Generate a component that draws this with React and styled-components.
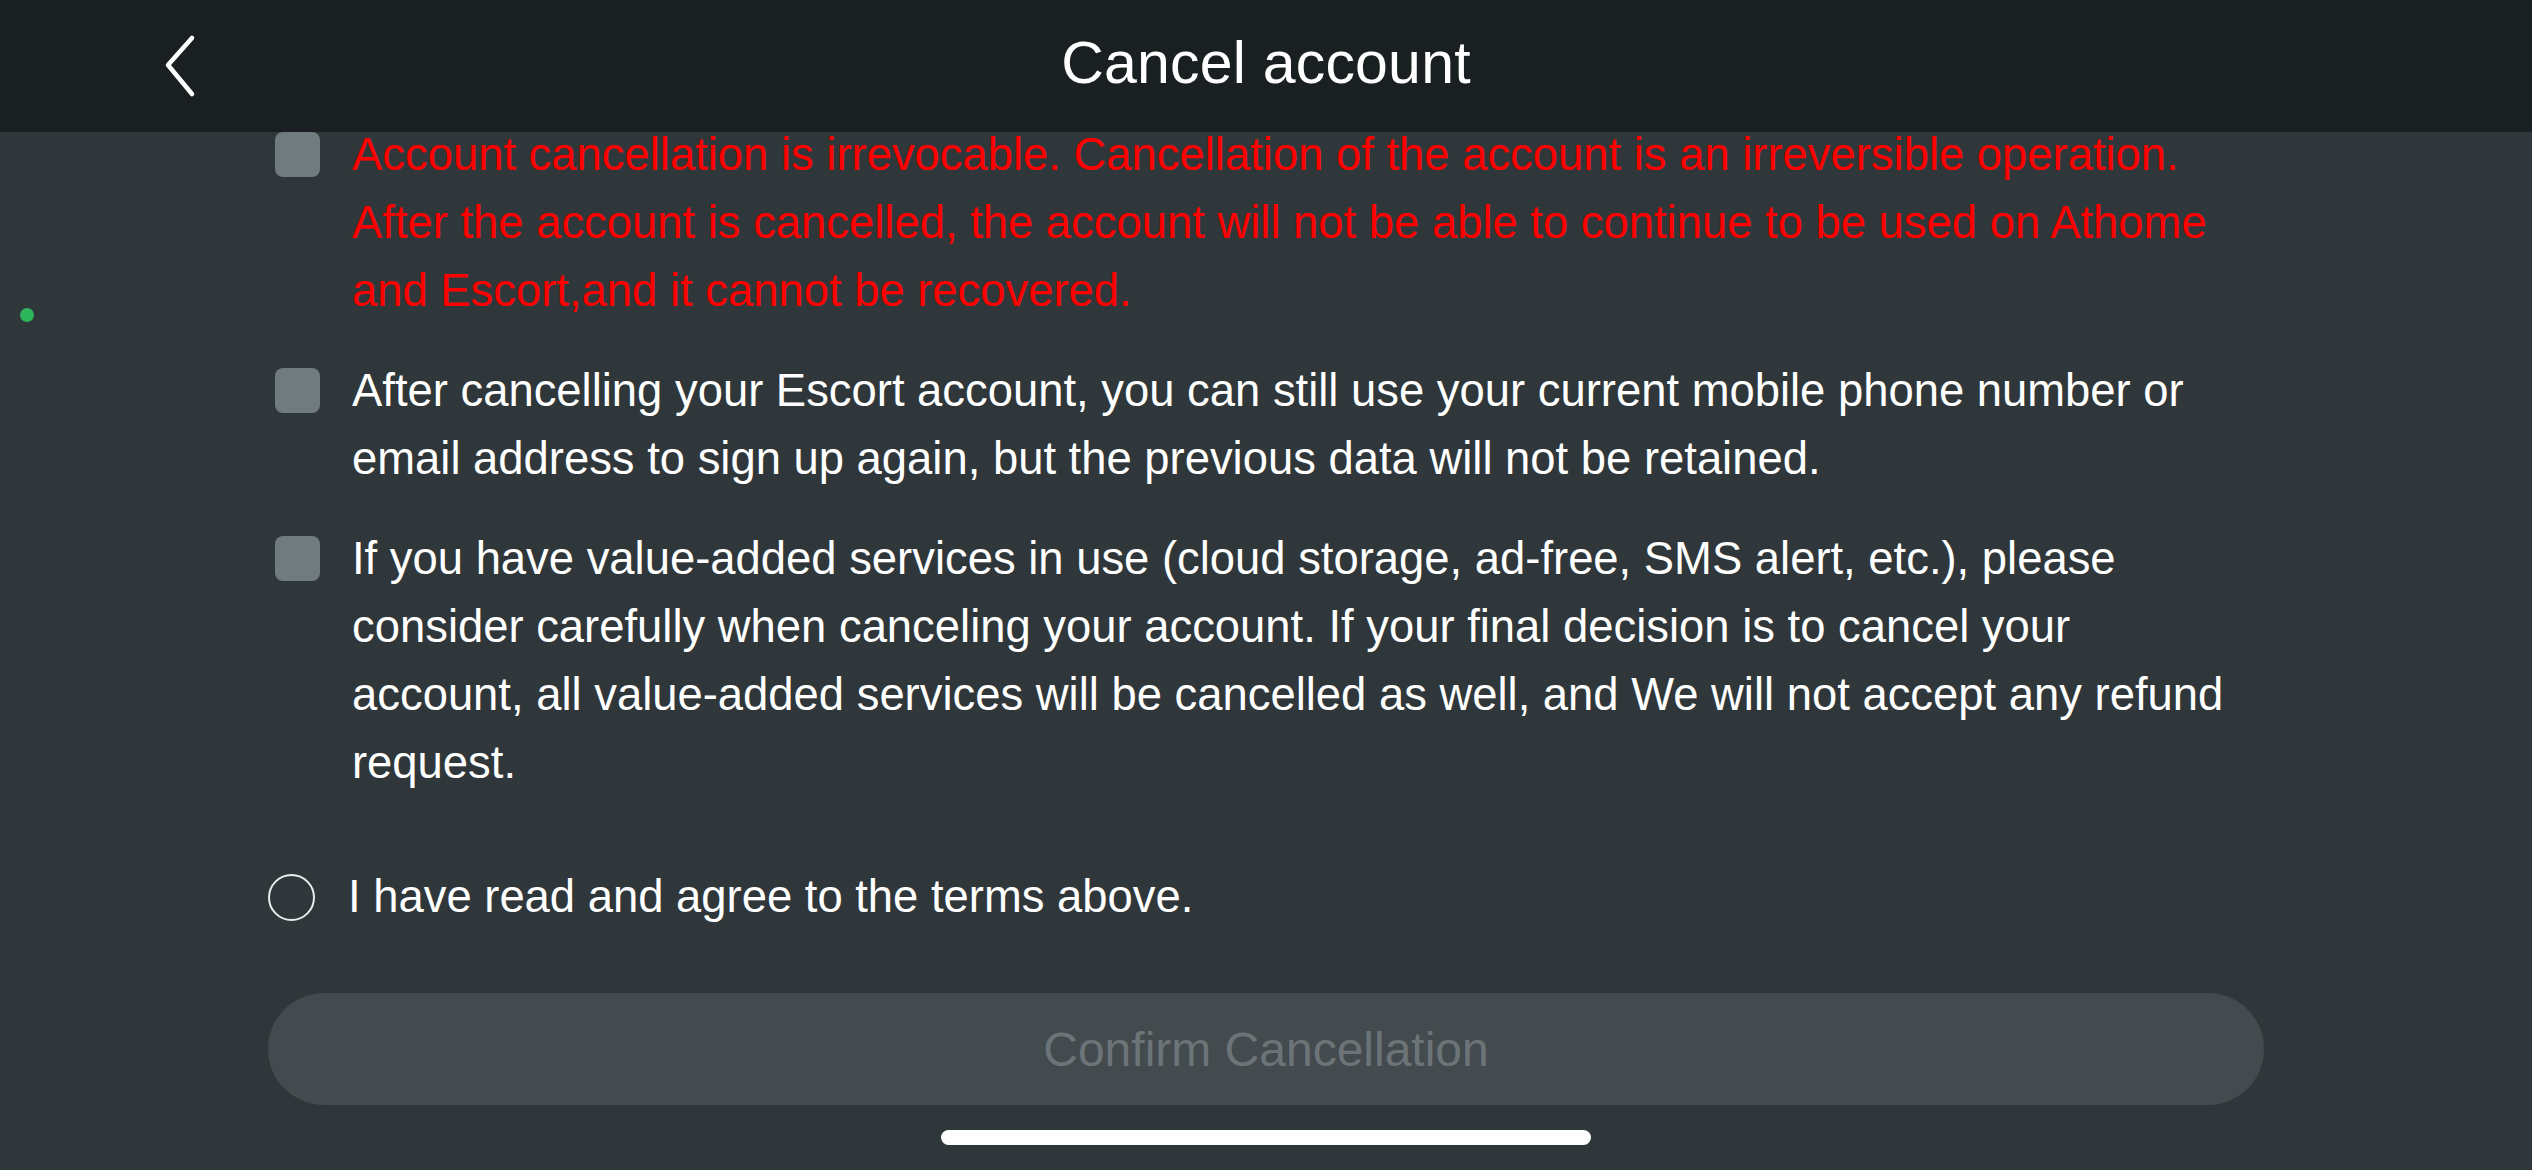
import React, { useState } from 'react'
import styled, { createGlobalStyle } from 'styled-components'

const GlobalStyle = createGlobalStyle`
  html, body {
    margin: 0;
    padding: 0;
    background: #30373a;
    overflow: hidden;
  }
  * {
    box-sizing: border-box;
  }
`

const Screen = styled.div`
  position: relative;
  width: 2532px;
  height: 1170px;
  display: flex;
  flex-direction: column;
  background: #30373a;
  font-family: 'Liberation Sans', Arial, sans-serif;
  color: #ffffff;
  overflow: hidden;
`

const Header = styled.header`
  position: relative;
  z-index: 1;
  flex: 0 0 132px;
  display: grid;
  grid-template-columns: 1fr auto 1fr;
  align-items: center;
  padding-bottom: 6px;
  background: #1a2022;
`

const BackButton = styled.button`
  justify-self: start;
  display: flex;
  align-items: center;
  margin-left: 152px;
  margin-top: 6px;
  padding: 8px;
  border: none;
  background: transparent;
  cursor: pointer;
`

const Title = styled.h1`
  margin: 0;
  font-size: 59px;
  font-weight: 400;
  letter-spacing: 0.2px;
  color: #ffffff;
`

const Body = styled.main`
  flex: 1;
  width: 1996px;
  margin: 0 auto;
  display: flex;
  flex-direction: column;
`

const TermList = styled.ul`
  list-style: none;
  margin: -11px 0 0;
  padding: 0;
  display: flex;
  flex-direction: column;
  gap: 32px;
`

const Term = styled.li`
  display: grid;
  grid-template-columns: 45px 1fr;
  column-gap: 32px;
  padding-left: 7px;
  padding-right: 30px;
`

const Box = styled.span`
  width: 45px;
  height: 45px;
  margin-top: 11px;
  border-radius: 8px;
  background: #6f7b7f;
`

const TermText = styled.p`
  margin: 0;
  font-size: 45.4px;
  line-height: 68px;
  color: ${(p) => (p.$warn ? '#ff0000' : '#ffffff')};
`

const AgreeRow = styled.label`
  display: flex;
  align-items: center;
  gap: 33px;
  margin-top: 66px;
  height: 68px;
  cursor: pointer;
`

const Radio = styled.span`
  flex: 0 0 47px;
  height: 47px;
  border-radius: 50%;
  border: 2px solid ${(p) => (p.$on ? '#2db55d' : '#e9ecec')};
  background: ${(p) => (p.$on ? '#2db55d' : 'transparent')};
`

const AgreeText = styled.span`
  font-size: 45.4px;
  color: #ffffff;
`

const ConfirmButton = styled.button`
  margin-top: 62px;
  height: 112px;
  width: 100%;
  border: none;
  border-radius: 56px;
  background: ${(p) => (p.disabled ? '#434b4f' : '#2db55d')};
  color: ${(p) => (p.disabled ? '#6c7477' : '#ffffff')};
  font-family: inherit;
  font-size: 48px;
`

const HomeBar = styled.div`
  width: 650px;
  height: 15px;
  margin: 25px auto 0;
  border-radius: 8px;
  background: #ffffff;
`

const StatusDot = styled.span`
  position: absolute;
  left: 20px;
  top: 308px;
  width: 14px;
  height: 14px;
  border-radius: 50%;
  background: #2db55d;
`

const terms = [
  {
    warn: true,
    text: 'Account cancellation is irrevocable. Cancellation of the account is an irreversible operation. After the account is cancelled, the account will not be able to continue to be used on Athome and Escort,and it cannot be recovered.'
  },
  {
    text: 'After cancelling your Escort account, you can still use your current mobile phone number or email address to sign up again, but the previous data will not be retained.'
  },
  {
    text: 'If you have value-added services in use (cloud storage, ad-free, SMS alert, etc.), please consider carefully when canceling your account. If your final decision is to cancel your account, all value-added services will be cancelled as well, and We will not accept any refund request.'
  }
]

const BackIcon = () => (
  <svg width="40" height="64" viewBox="0 0 40 64" fill="none">
    <path
      d="M32 4 L8 31 L32 60"
      stroke="#ffffff"
      strokeWidth="4.5"
      strokeLinecap="round"
      strokeLinejoin="round"
    />
  </svg>
)

export default function App() {
  const [agreed, setAgreed] = useState(false)

  return (
    <Screen>
      <GlobalStyle />
      <Header>
        <BackButton aria-label="Back">
          <BackIcon />
        </BackButton>
        <Title>Cancel account</Title>
        <span />
      </Header>
      <Body>
        <TermList>
          {terms.map((t, i) => (
            <Term key={i}>
              <Box />
              <TermText $warn={t.warn}>{t.text}</TermText>
            </Term>
          ))}
        </TermList>
        <AgreeRow onClick={() => setAgreed(!agreed)}>
          <Radio $on={agreed} />
          <AgreeText>I have read and agree to the terms above.</AgreeText>
        </AgreeRow>
        <ConfirmButton disabled={!agreed}>Confirm Cancellation</ConfirmButton>
        <HomeBar />
      </Body>
      <StatusDot />
    </Screen>
  )
}
